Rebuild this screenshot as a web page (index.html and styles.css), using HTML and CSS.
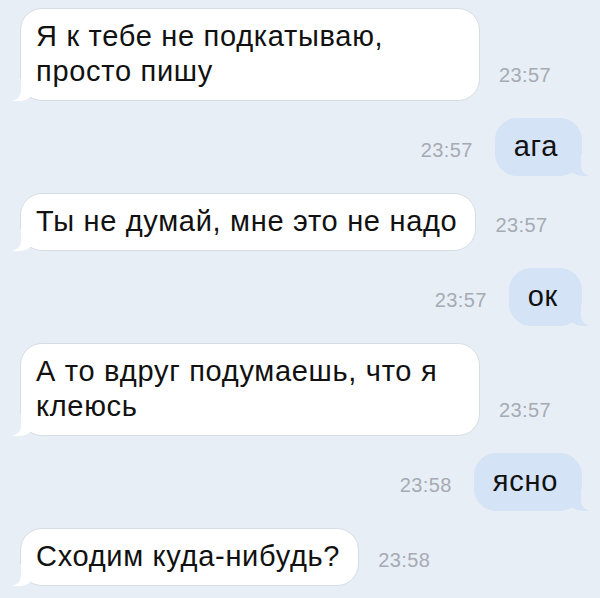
FILE: index.html
```html
<!DOCTYPE html>
<html lang="ru">
<head>
    <meta charset="UTF-8">
    <title>Сообщения</title>
    <meta name="viewport" content="width=device-width, initial-scale=1.0">
    <link rel="stylesheet" href="styles.css">
</head>
<body>

<div class="chat">
    <div class="row in">
        <div class="bubble">Я к тебе не подкатываю, просто пишу</div>
        <div class="time">23:57</div>
    </div>

    <div class="row out">
        <div class="time">23:57</div>
        <div class="bubble">ага</div>
    </div>

    <div class="row in">
        <div class="bubble">Ты не думай, мне это не надо</div>
        <div class="time">23:57</div>
    </div>

    <div class="row out">
        <div class="time">23:57</div>
        <div class="bubble">ок</div>
    </div>

    <div class="row in">
        <div class="bubble">А то вдруг подумаешь, что я клеюсь</div>
        <div class="time">23:57</div>
    </div>

    <div class="row out">
        <div class="time">23:58</div>
        <div class="bubble">ясно</div>
    </div>

    <div class="row in">
        <div class="bubble">Сходим куда-нибудь?</div>
        <div class="time">23:58</div>
    </div>
</div>

</body>
</html>
```

FILE: styles.css
```css
:root {
    --fon: #e8eef6;
    --belyj: #ffffff;
    --goluboj: #d4e3f6;
    --ramka: #d7dde5;
    --tekst: #111111;
    --vremya: #a6abb3;
}

body {
    font-family: 'Liberation Sans', Arial, Helvetica, sans-serif;
    background-color: var(--fon);
    margin: 0;
    padding: 0;
}

.chat {
    display: flex;
    flex-direction: column;
    gap: 17px;
    padding: 8px 18px 0 20px;
}

.row {
    display: flex;
    align-items: flex-end;
}

.row.in {
    gap: 19px;
}

.row.out {
    justify-content: flex-end;
    gap: 22px;
}

.bubble {
    position: relative;
    font-size: 29px;
    letter-spacing: 0.7px;
    line-height: 35px;
    color: var(--tekst);
    border-radius: 22px;
    padding: 10px 18px 11px 15px;
    box-sizing: border-box;
}

.row.in .bubble {
    background-color: var(--belyj);
    border: 1px solid var(--ramka);
    max-width: 460px;
}

.row.out .bubble {
    background-color: var(--goluboj);
    border: 1px solid var(--goluboj);
    padding: 10px 23px 11px 18px;
}

/* хвостики */
.bubble::before,
.bubble::after {
    content: "";
    position: absolute;
    bottom: -1px;
    height: 22px;
}

.row.in .bubble::before {
    left: -8px;
    width: 22px;
    background-color: var(--belyj);
    border-bottom-right-radius: 16px 14px;
}

.row.in .bubble::after {
    left: -26px;
    width: 26px;
    background-color: var(--fon);
    border-bottom-right-radius: 10px;
}

.row.out .bubble::before {
    right: -8px;
    width: 22px;
    background-color: var(--goluboj);
    border-bottom-left-radius: 16px 14px;
}

.row.out .bubble::after {
    right: -26px;
    width: 26px;
    background-color: var(--fon);
    border-bottom-left-radius: 10px;
}

.time {
    font-size: 20px;
    letter-spacing: 0.4px;
    line-height: 23px;
    color: var(--vremya);
    margin-bottom: 14px;
    white-space: nowrap;
}
```
